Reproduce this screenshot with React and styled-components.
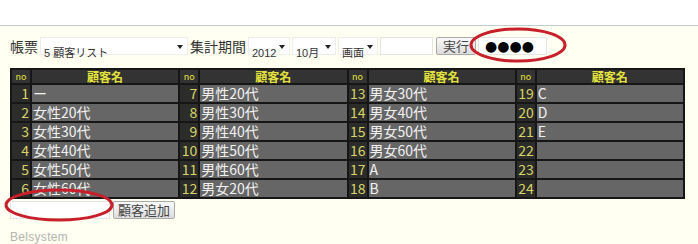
import styled, { createGlobalStyle } from 'styled-components'

const GlobalStyle = createGlobalStyle`
	html, body {
		margin: 0;
		padding: 0;
		background: #fffff2;
	}
	body {
		width: 698px;
		height: 244px;
		overflow: hidden;
		font-family: "Noto Sans CJK JP", "Liberation Sans", sans-serif;
	}
`

const Page = styled.div`
	position: relative;
	width: 698px;
	height: 244px;
	background: #fffff2;
`

const TopBar = styled.div`
	height: 25px;
	background: #ffffff;
	border-bottom: 1px solid #c4ccd8;
`

const Content = styled.div`
	padding: 11px 0 0 10px;
`

const Toolbar = styled.div`
	display: flex;
	align-items: center;
	gap: 2px;
	height: 18px;
`

const Label = styled.span`
	font-size: 14px;
	line-height: 18px;
	color: #333;
`

const SelectBox = styled.div`
	position: relative;
	width: ${p => p.$w}px;
	height: 18px;
	background: #fff;
	border: 1px solid #eeeeee;
	box-sizing: border-box;

	&::after {
		content: '';
		position: absolute;
		right: 4px;
		top: 7px;
		border-left: 3px solid transparent;
		border-right: 3px solid transparent;
		border-top: 4px solid #222;
	}
`

const Select = styled.select`
	appearance: none;
	width: 100%;
	height: 100%;
	border: none;
	background: transparent;
	padding: 0 0 0 3px;
	font-family: "Liberation Sans", "Noto Sans CJK JP", sans-serif;
	font-size: 11px;
	color: #333;
	outline: none;
`

const Input = styled.input`
	width: ${p => p.$w}px;
	height: 18px;
	box-sizing: border-box;
	border: 1px solid #e4e4e4;
	background: #fff;
	padding: 0 6px;
	font-size: 14px;
	font-family: "DejaVu Sans", sans-serif;
	color: #000;
	outline: none;
`

const Button = styled.button`
	width: ${p => p.$w}px;
	height: 18px;
	margin-left: ${p => p.$ml || 0}px;
	padding: 0;
	border: 1px solid #aaa;
	border-radius: 2px;
	background: linear-gradient(#fafafa, #dcdcdc);
	font-family: "Noto Sans CJK JP", sans-serif;
	font-size: 13px;
	line-height: 16px;
	color: #444;
`

const Table = styled.table`
	margin-top: 13px;
	width: 675px;
	border-collapse: collapse;
	border: 2px solid #161616;
	table-layout: fixed;
`

const HeadCell = styled.th`
	width: ${p => (p.$small ? '18px' : 'auto')};
	height: 13px;
	padding: 0;
	background: #333;
	border: 2px solid #161616;
	color: #e4e23c;
	font-size: ${p => (p.$small ? '9px' : '12px')};
	font-weight: ${p => (p.$small ? 'normal' : 'bold')};
	line-height: 13px;
	text-align: center;
`

const NoCell = styled.td`
	height: 17px;
	padding: 0 1px 0 0;
	background: #2c2c2a;
	border: 2px solid #161616;
	color: #d8d468;
	font-size: 14px;
	line-height: 17px;
	text-align: right;
`

const NameCell = styled.td`
	height: 17px;
	padding: 0 0 0 1px;
	background: #666;
	border: 2px solid #161616;
	color: #f2f2f2;
	font-size: 14px;
	line-height: 17px;
	text-align: left;
	white-space: nowrap;
	overflow: hidden;
`

const AddRow = styled.div`
	display: flex;
	align-items: center;
	gap: 3px;
	margin-top: 2px;
`

const Footer = styled.div`
	margin-top: 11px;
	font-family: "Liberation Sans", sans-serif;
	font-size: 12px;
	line-height: 14px;
	color: #b4b4b0;
	letter-spacing: 0.3px;
`

const Mark = styled.svg`
	position: absolute;
	left: ${p => p.$x}px;
	top: ${p => p.$y}px;
	pointer-events: none;
`

const names = [
	'ー', '女性20代', '女性30代', '女性40代', '女性50代', '女性60代',
	'男性20代', '男性30代', '男性40代', '男性50代', '男性60代', '男女20代',
	'男女30代', '男女40代', '男女50代', '男女60代', 'A', 'B',
	'C', 'D', 'E', '', '', '',
]

function App() {
	const rows = [0, 1, 2, 3, 4, 5]
	const groups = [0, 1, 2, 3]

	return (
		<Page>
			<GlobalStyle />
			<TopBar />
			<Content>
				<Toolbar>
					<Label>帳票</Label>
					<SelectBox $w={148}>
						<Select defaultValue="5"><option value="5">5 顧客リスト</option></Select>
					</SelectBox>
					<Label>集計期間</Label>
					<SelectBox $w={42}>
						<Select defaultValue="2012"><option>2012</option></Select>
					</SelectBox>
					<SelectBox $w={44}>
						<Select defaultValue="10月"><option>10月</option></Select>
					</SelectBox>
					<SelectBox $w={40}>
						<Select defaultValue="画面"><option>画面</option></Select>
					</SelectBox>
					<Input $w={53} />
					<Button $w={40} $ml={1}>実行</Button>
					<Input $w={69} type="text" defaultValue="●●●●" />
				</Toolbar>

				<Table>
					<thead>
						<tr>
							{groups.map(g => [
								<HeadCell key={'n' + g} $small>no</HeadCell>,
								<HeadCell key={'h' + g}>顧客名</HeadCell>,
							])}
						</tr>
					</thead>
					<tbody>
						{rows.map(r => (
							<tr key={r}>
								{groups.map(g => {
									const i = g * 6 + r
									return [
										<NoCell key={'n' + g}>{i + 1}</NoCell>,
										<NameCell key={'v' + g}>{names[i]}</NameCell>,
									]
								})}
							</tr>
						))}
					</tbody>
				</Table>

				<AddRow>
					<Input $w={100} />
					<Button $w={62}>顧客追加</Button>
				</AddRow>
				<Footer>Belsystem</Footer>
			</Content>

			<Mark $x={468} $y={26} width="100" height="38" viewBox="0 0 100 38">
				<ellipse cx="50" cy="19" rx="47" ry="16" fill="none" stroke="#c8202a" strokeWidth="3" />
			</Mark>
			<Mark $x={3} $y={187} width="112" height="36" viewBox="0 0 112 36">
				<ellipse cx="56" cy="18" rx="53" ry="15" fill="none" stroke="#c8202a" strokeWidth="3" />
			</Mark>
		</Page>
	)
}

export default App
